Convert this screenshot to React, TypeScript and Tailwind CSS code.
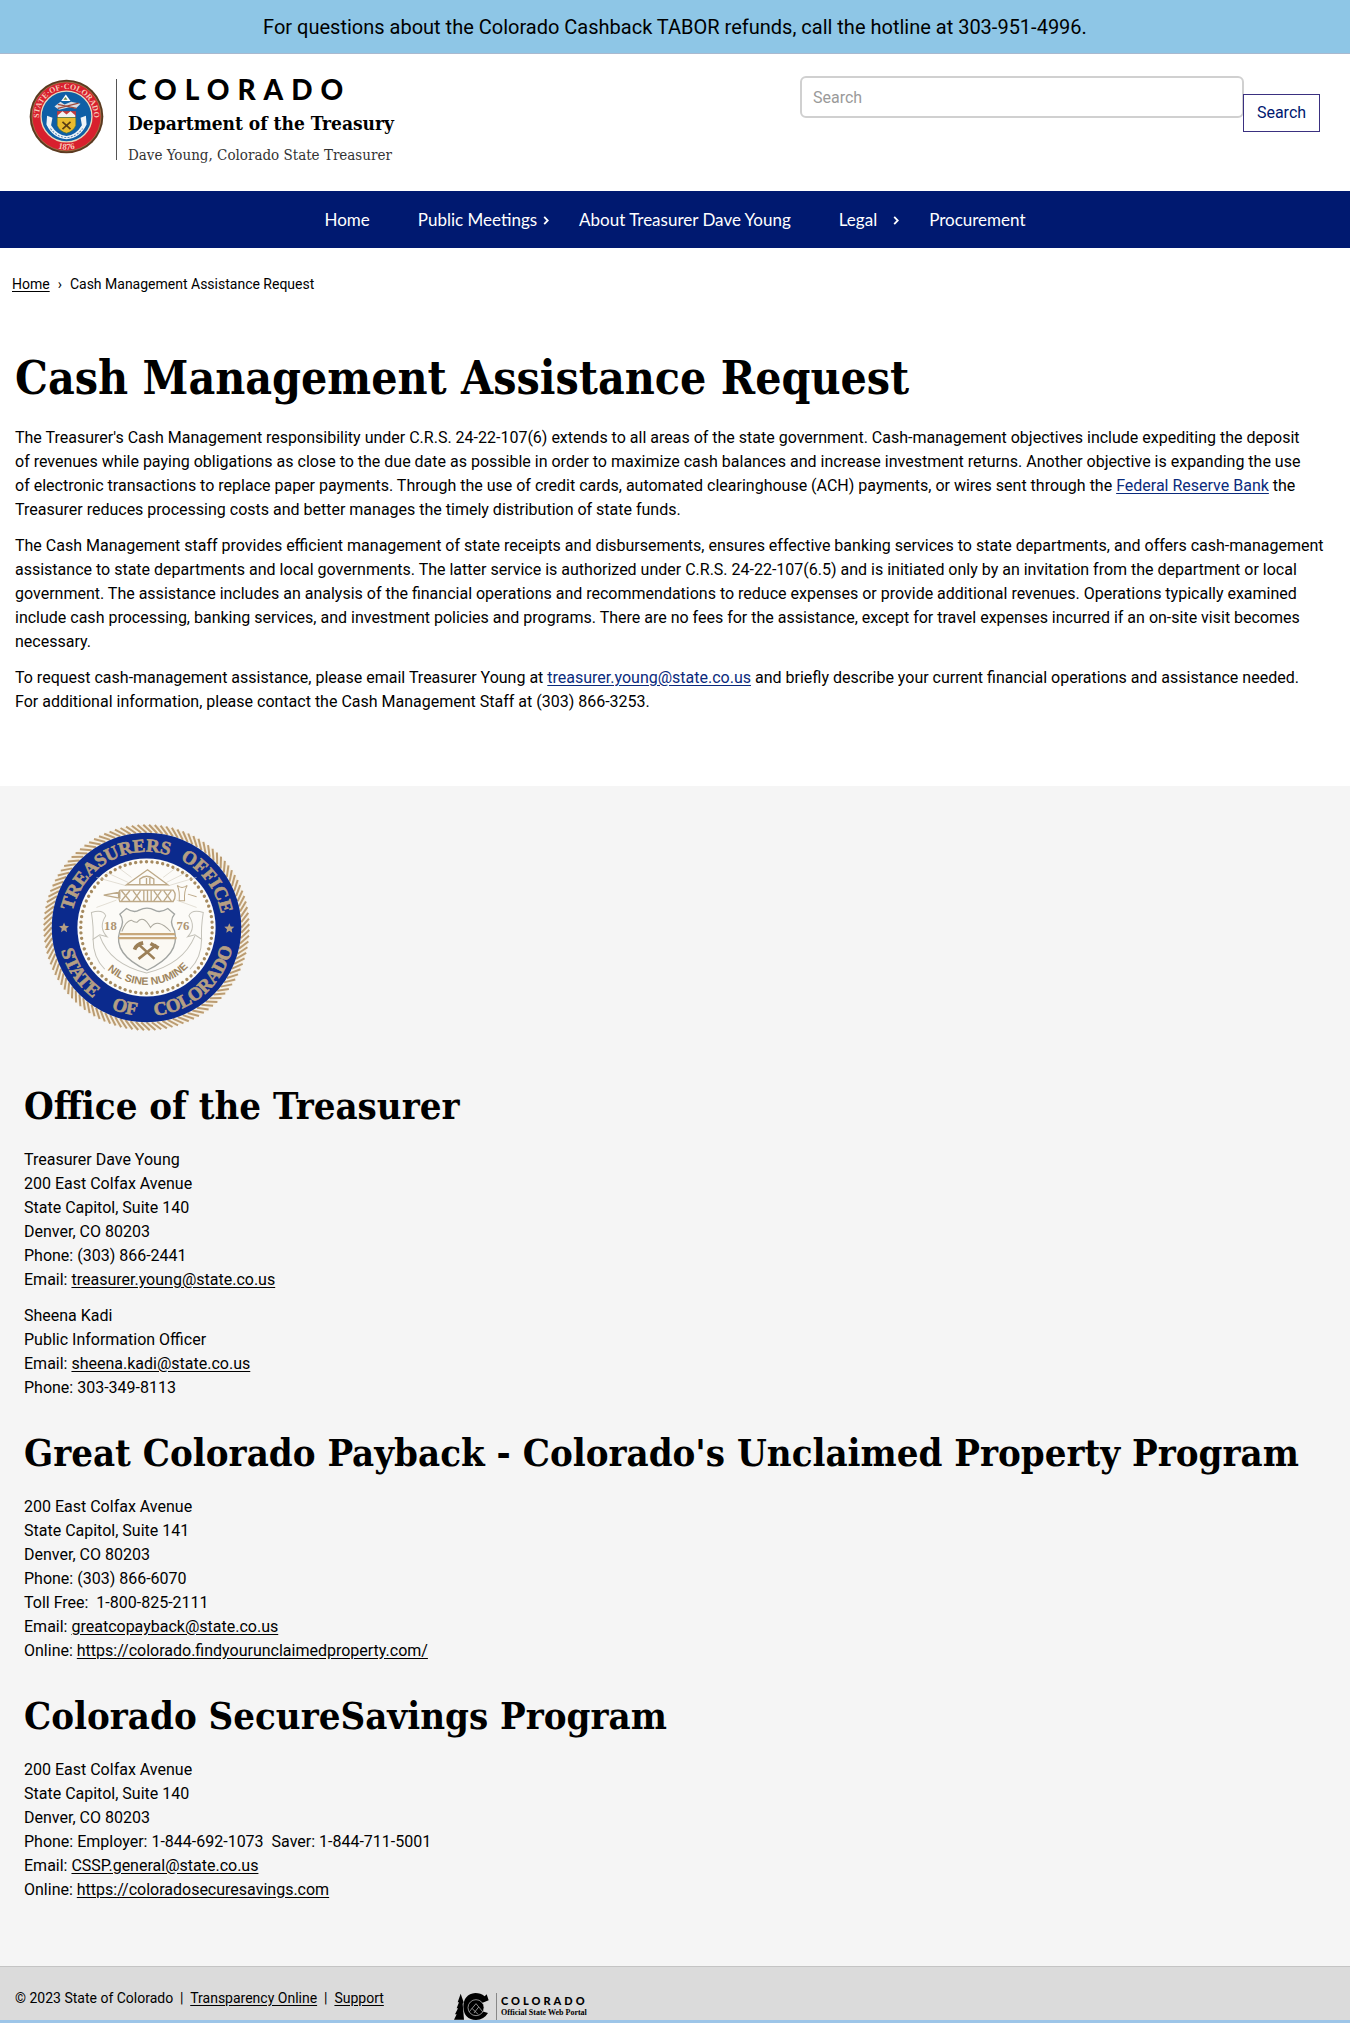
import type { ReactNode } from "react";

const serif = "font-['DejaVu_Serif_Condensed','DejaVu_Serif',serif]";

/* Text set on a circle around the origin; `angle` is the middle of the word, in degrees clockwise from east. */
function ArcText({ id, r, angle, inward = false, size, fill, weight = 0, family = "'Liberation Serif', serif", children }: {
  id: string; r: number; angle: number; inward?: boolean; size: number; fill: string; weight?: number; family?: string; children: string;
}) {
  const d = inward ? `M ${-r} 0 A ${r} ${r} 0 0 0 ${r} 0` : `M ${-r} 0 A ${r} ${r} 0 0 1 ${r} 0`;
  return (
    <g transform={`rotate(${inward ? angle - 90 : angle + 90})`}>
      <path id={id} d={d} fill="none" />
      <text fontSize={size} fontWeight={700} fill={fill} stroke={fill} strokeWidth={weight} textAnchor="middle" fontFamily={family}>
        <textPath href={`#${id}`} startOffset="50%">{children}</textPath>
      </text>
    </g>
  );
}

function polar(r: number, deg: number): string {
  const a = (deg * Math.PI) / 180;
  return `${(r * Math.cos(a)).toFixed(1)} ${(r * Math.sin(a)).toFixed(1)}`;
}

const star = "M0 -15 L4 -5 L15 -4 L7 3 L9 14 L0 8 L-9 14 L-7 3 L-15 -4 L-4 -5 Z";

function TreasurerSeal() {
  const tan = "#b59f83";
  const rope = Array.from({ length: 112 }, (_, i) => (i * 360) / 112);
  const dots = Array.from({ length: 76 }, (_, i) => (i * 360) / 76);
  return (
    <svg viewBox="-310 -310 620 620" className="h-[207px] w-[207px]" role="img" aria-label="Treasurer's Office, State of Colorado">
      <circle r="296" fill="none" stroke="#f6f0e4" strokeWidth="24" />
      {rope.map((a) => (
        <path key={a} d={`M${polar(284, a)} L${polar(308, a - 5)}`} stroke="#bb9c72" strokeWidth="6" />
      ))}
      <circle r="284" fill="#0b2a8d" />
      <circle r="207" fill="#fcfbf8" />
      {dots.map((a) => (
        <circle key={a} r="5" fill="#a58a5f" transform={`rotate(${a}) translate(197 0)`} />
      ))}
      <ArcText id="ts-a" r={227} angle={240} size={56} weight={2} fill={tan}>TREASURERS</ArcText>
      <ArcText id="ts-b" r={227} angle={-37} size={56} weight={2} fill={tan}>OFFICE</ArcText>
      <ArcText id="ts-c" r={265} angle={146} inward size={56} weight={2} fill={tan}>STATE</ArcText>
      <ArcText id="ts-d" r={265} angle={105} inward size={56} weight={2} fill={tan}>OF</ArcText>
      <ArcText id="ts-e" r={265} angle={49} inward size={56} weight={2} fill={tan}>COLORADO</ArcText>
      <path d={star} fill={tan} transform="translate(-247 0)" />
      <path d={star} fill={tan} transform="translate(248 2)" />
      {/* rays and eye */}
      <path
        d="M-60 -125 L-150 -150 M-55 -135 L-120 -165 M-45 -150 L-85 -180 M65 -125 L150 -150 M60 -135 L120 -165 M50 -150 L90 -180 M-90 -82 L-150 -60 M90 -82 L150 -60"
        fill="none" stroke="#d6d0c2" strokeWidth="2"
      />
      <g fill="none" stroke="#bda988" strokeWidth="4">
        <path d="M3 -173 L64 -128 H-60 Z" />
        <path d="M-20 -130 V-145 Q0 -162 22 -145 V-130 M0 -148 V-130 M10 -148 V-130" />
        <path d="M-128 -97 L-80 -106 V-88 Z M-80 -112 H80 Q92 -97 80 -78 H-80 Q-88 -97 -80 -112 M-75 -110 L-50 -80 M-50 -110 L-75 -80 M-40 -110 L-18 -80 M-18 -110 L-40 -80 M-8 -112 V-78 M3 -112 V-78 M14 -112 V-78 M22 -110 L44 -80 M44 -110 L22 -80 M52 -110 L74 -80 M74 -110 L52 -80" />
        <path d="M92 -126 Q100 -112 98 -80 H114 Q112 -110 122 -126 Q106 -114 92 -126 Z M124 -100 L150 -92" strokeWidth="3" />
      </g>
      {/* ribbon */}
      <g fill="none" stroke="#c3c1b8" strokeWidth="3">
        <path d="M-165 -45 Q-130 -55 -122 -35 Q-145 0 -118 28 L-140 22 L-160 35 Q-158 0 -165 -45 Z" />
        <path d="M170 -45 Q135 -55 127 -35 Q150 0 123 28 L145 22 L165 35 Q163 0 170 -45 Z" />
        <path d="M-140 25 Q-110 110 0 136 Q110 110 145 25 M-160 35 Q-160 90 -125 125 M165 35 Q165 90 130 125" />
      </g>
      {/* shield */}
      <path d="M-80 -40 L-60 -57 Q-38 -42 -22 -52 Q2 -64 24 -52 Q40 -42 64 -57 L84 -40 Q66 -20 84 10 Q102 80 2 128 Q-102 80 -80 10 Q-64 -20 -80 -40 Z" fill="#fbf9f3" stroke="#a2a5a2" strokeWidth="4" />
      <path d="M-74 12 Q-62 -20 -46 -22 Q-34 -14 -28 -16 Q-10 -40 12 0 Q34 -30 72 12" fill="none" stroke="#aaa79c" strokeWidth="3" />
      <path d="M-80 20 H86 M-84 32 H90" stroke="#c8a87c" strokeWidth="7" />
      <g stroke="#9c8058" strokeWidth="8" fill="none">
        <path d="M-24 94 L30 52 M24 94 L-22 52" />
        <path d="M-36 66 Q-30 50 -10 46 M12 48 L36 62" strokeWidth="11" />
      </g>
      <g fontFamily="'Liberation Serif', serif" fontWeight={700} fontSize="38" fill="#ad9473">
        <text x="-127" y="6">18</text>
        <text x="90" y="6">76</text>
      </g>
      <ArcText id="ts-f" r={172} angle={88} inward size={32} fill="#9f8660" family="'Liberation Sans', sans-serif">NIL SINE NUMINE</ArcText>
    </svg>
  );
}

function StateSeal() {
  return (
    <svg viewBox="-112 -112 224 224" className="h-[75px] w-[75px] shrink-0" role="img" aria-label="Seal of the State of Colorado, 1876">
      <circle r="110" fill="#5b3a20" />
      <circle r="103" fill="#d8202e" stroke="#a88b52" strokeWidth="2" />
      <circle r="76" fill="#0f5fa6" stroke="#e6dcc0" strokeWidth="4" />
      <ArcText id="ss-a" r={82} angle={-90} size={24} fill="#f5c9b8">STATE·OF·COLORADO</ArcText>
      <ArcText id="ss-b" r={99} angle={90} inward size={26} fill="#f5c9b8">1876</ArcText>
      <path d="M-2 -66 L12 -46 H-16 Z" fill="#fff" />
      <path d="M-3 -58 L3 -50 H-9 Z" fill="#6c8c4a" />
      <path d="M-36 -30 L-18 -44 L-6 -36 L14 -44 L42 -38 L28 -24 L8 -28 L-22 -20 Z" fill="#d9dee6" />
      <path d="M-26 -36 L30 -24 M-26 -24 L36 -40" stroke="#9e4a3c" strokeWidth="4" />
      <path d="M-28 -16 H28 V2 H-28 Z" fill="#c33b3b" />
      <path d="M-26 -4 L-12 -16 L0 -6 L12 -16 L26 -4 V3 H-26 Z" fill="#f2f2f2" />
      <path d="M-28 3 H28 V26 Q22 44 0 50 Q-22 44 -28 26 Z" fill="#e9bb2e" stroke="#3c6e3b" strokeWidth="2" />
      <path d="M-12 38 L12 16 M12 38 L-12 16" stroke="#5a3d14" strokeWidth="5" />
      <path d="M-58 -2 L-42 4 L-46 26 Q-28 56 0 58 Q28 56 46 26 L42 4 L58 -2 L60 24 Q40 66 0 68 Q-40 66 -60 24 Z" fill="#eef3f8" />
      <path d="M-48 36 Q-28 62 0 63 Q28 62 48 36" fill="none" stroke="#5d88b3" strokeWidth="3" strokeDasharray="6 4" />
    </svg>
  );
}

function PortalMark() {
  return (
    <svg viewBox="0 0 105 81" className="h-[27px] w-[35px] shrink-0" aria-hidden="true">
      <path d="M0 80 L8 64 L3 64 L12 46 L8 46 L15 28 L11 28 L20 2 L29 28 L26 32 L30 80 Z" fill="#000" />
      <path d="M104 22 L98 4 L92 10 Q80 0 64 0 Q28 4 28 42 Q30 80 66 81 Q90 80 102 60 L82 54 H60 Q50 40 62 28 Q76 18 84 30 Z" fill="#000" />
      <circle cx="66" cy="44" r="24" fill="#000" stroke="#d0d0d0" strokeWidth="2" />
      <path d="M46 56 L66 32 L86 56 M54 46 L72 64 M60 60 L74 42" fill="none" stroke="#d0d0d0" strokeWidth="2" />
    </svg>
  );
}

function Chevron() {
  return (
    <svg viewBox="0 0 6 10" className="mt-px h-[9px] w-[6px]" aria-hidden="true">
      <path d="M1 1 L5 5 L1 9" fill="none" stroke="currentColor" strokeWidth="2" />
    </svg>
  );
}

function A({ href, children, className = "" }: { href: string; children: ReactNode; className?: string }) {
  return <a href={href} className={`underline underline-offset-2 ${className}`}>{children}</a>;
}

function Lines({ items }: { items: ReactNode[] }) {
  return (
    <p className="mb-3">
      {items.map((item, i) => <span key={i} className="block">{item}</span>)}
    </p>
  );
}

function H2({ children }: { children: string }) {
  return <h2 className={`${serif} mt-[29px] mb-[18px] text-[38px] leading-12 font-bold`}>{children}</h2>;
}

const nav = [
  { label: "Home", cls: "px-6" },
  { label: "Public Meetings", sub: true, cls: "pl-6 pr-1.5 gap-1.5" },
  { label: "About Treasurer Dave Young", cls: "px-6" },
  { label: "Legal", sub: true, cls: "pl-6 pr-1.5 gap-4" },
  { label: "Procurement", cls: "px-6" },
];

export default function App() {
  return (
    <div className="bg-white font-[Roboto,sans-serif] text-base leading-6 text-black">
      <div className="border-b border-[#a9b9cf] bg-[#8ec6e6] px-4 pt-[13px] pb-3 text-center text-[20px] leading-7">
        For questions about the Colorado Cashback TABOR refunds, call the hotline at 303-951-4996.
      </div>

      <header className="flex items-start justify-between pt-[22px] pr-[30px] pb-[26px] pl-[29px]">
        <a href="#" className="flex pt-[3px]">
          <StateSeal />
          <span className="ml-3 block h-[81px] border-l border-[#555]" />
          <span className="ml-[11px] flex flex-col">
            <span className="font-[Lato,sans-serif] text-[28px] leading-5 font-black tracking-[8px]">COLORADO</span>
            <span className={`${serif} mt-3 text-[19px] leading-6 font-bold whitespace-nowrap`}>Department of the Treasury</span>
            <span className={`${serif} mt-[10px] text-[15px] leading-5 whitespace-nowrap text-[#333]`}>Dave Young, Colorado State Treasurer</span>
          </span>
        </a>
        <form className="flex w-[520px] items-start" onSubmit={(e) => e.preventDefault()}>
          <input
            type="search"
            aria-label="Search"
            placeholder="Search"
            className="h-[42px] min-w-0 flex-1 rounded-md border-2 border-[#d0d0d0] px-[11px] placeholder:text-[#9a9a9a]"
          />
          <button type="submit" className="mt-[18px] -ml-px h-[38px] w-[77px] border border-[#3a3080] bg-white text-[#001970]">Search</button>
        </form>
      </header>

      <nav aria-label="Main" className="flex h-[57px] items-center justify-center bg-[#001970] font-[Lato,sans-serif] text-[17px] text-white">
        {nav.map((n) => (
          <a key={n.label} href="#" className={`flex items-center whitespace-nowrap ${n.cls}`}>
            {n.label}
            {n.sub && <Chevron />}
          </a>
        ))}
      </nav>

      <nav aria-label="Breadcrumb" className="flex items-center px-3 pt-[26px] text-[14px] leading-5">
        <A href="#">Home</A>
        <span className="mx-2">›</span>
        <span>Cash Management Assistance Request</span>
      </nav>

      <main className="px-[15px] pt-14 pb-[60px]">
        <h1 className={`${serif} mb-5 text-[46px] leading-14 font-bold`}>Cash Management Assistance Request</h1>
        <Lines items={[
          "The Treasurer's Cash Management responsibility under C.R.S. 24-22-107(6) extends to all areas of the state government. Cash-management objectives include expediting the deposit",
          "of revenues while paying obligations as close to the due date as possible in order to maximize cash balances and increase investment returns. Another objective is expanding the use",
          <>of electronic transactions to replace paper payments. Through the use of credit cards, automated clearinghouse (ACH) payments, or wires sent through the <A href="#" className="text-[#0a2a7c]">Federal Reserve Bank</A> the</>,
          "Treasurer reduces processing costs and better manages the timely distribution of state funds.",
        ]} />
        <Lines items={[
          "The Cash Management staff provides efficient management of state receipts and disbursements, ensures effective banking services to state departments, and offers cash-management",
          "assistance to state departments and local governments. The latter service is authorized under C.R.S. 24-22-107(6.5) and is initiated only by an invitation from the department or local",
          "government. The assistance includes an analysis of the financial operations and recommendations to reduce expenses or provide additional revenues. Operations typically examined",
          "include cash processing, banking services, and investment policies and programs. There are no fees for the assistance, except for travel expenses incurred if an on-site visit becomes",
          "necessary.",
        ]} />
        <Lines items={[
          <>To request cash-management assistance, please email Treasurer Young at <A href="#" className="text-[#0a2a7c]">treasurer.young@state.co.us</A> and briefly describe your current financial operations and assistance needed.</>,
          "For additional information, please contact the Cash Management Staff at (303) 866-3253.",
        ]} />
      </main>

      <section aria-label="Contact" className="bg-[#f5f5f5] px-6 pt-[38px] pb-[52px]">
        <div className="mb-[51px] ml-[19px]"><TreasurerSeal /></div>
        <H2>Office of the Treasurer</H2>
        <Lines items={[
          "Treasurer Dave Young", "200 East Colfax Avenue", "State Capitol, Suite 140", "Denver, CO 80203", "Phone: (303) 866-2441",
          <>Email: <A href="#">treasurer.young@state.co.us</A></>,
        ]} />
        <Lines items={[
          "Sheena Kadi", "Public Information Officer",
          <>Email: <A href="#">sheena.kadi@state.co.us</A></>,
          "Phone: 303-349-8113",
        ]} />
        <H2>Great Colorado Payback - Colorado's Unclaimed Property Program</H2>
        <Lines items={[
          "200 East Colfax Avenue", "State Capitol, Suite 141", "Denver, CO 80203", "Phone: (303) 866-6070", "Toll Free: \u00a01-800-825-2111",
          <>Email: <A href="#">greatcopayback@state.co.us</A></>,
          <>Online: <A href="#">https://colorado.findyourunclaimedproperty.com/</A></>,
        ]} />
        <H2>Colorado SecureSavings Program</H2>
        <Lines items={[
          "200 East Colfax Avenue", "State Capitol, Suite 140", "Denver, CO 80203", "Phone: Employer: 1-844-692-1073 \u00a0Saver: 1-844-711-5001",
          <>Email: <A href="#">CSSP.general@state.co.us</A></>,
          <>Online: <A href="#">https://coloradosecuresavings.com</A></>,
        ]} />
      </section>

      <footer className="flex items-start border-t border-b-[3px] border-t-[#c4c4c4] border-b-[#9dc5e8] bg-[#dbdbdb] pl-[15px] text-[14px] leading-5">
        <p className="w-[439px] shrink-0 pt-[21px]">
          © 2023 State of Colorado &nbsp;|&nbsp; <A href="#">Transparency Online</A> &nbsp;|&nbsp; <A href="#">Support</A>
        </p>
        <a href="#" className="flex pt-[26px]">
          <PortalMark />
          <span className="ml-[7px] block border-l border-[#888]" />
          <span className="ml-1 flex flex-col">
            <span className="mt-1 font-[Lato,sans-serif] text-[11px] leading-2 font-black tracking-[3px]">COLORADO</span>
            <span className="mt-1 font-['Liberation_Serif',serif] text-[8px] leading-2 font-bold whitespace-nowrap">Official State Web Portal</span>
          </span>
        </a>
      </footer>
    </div>
  );
}
